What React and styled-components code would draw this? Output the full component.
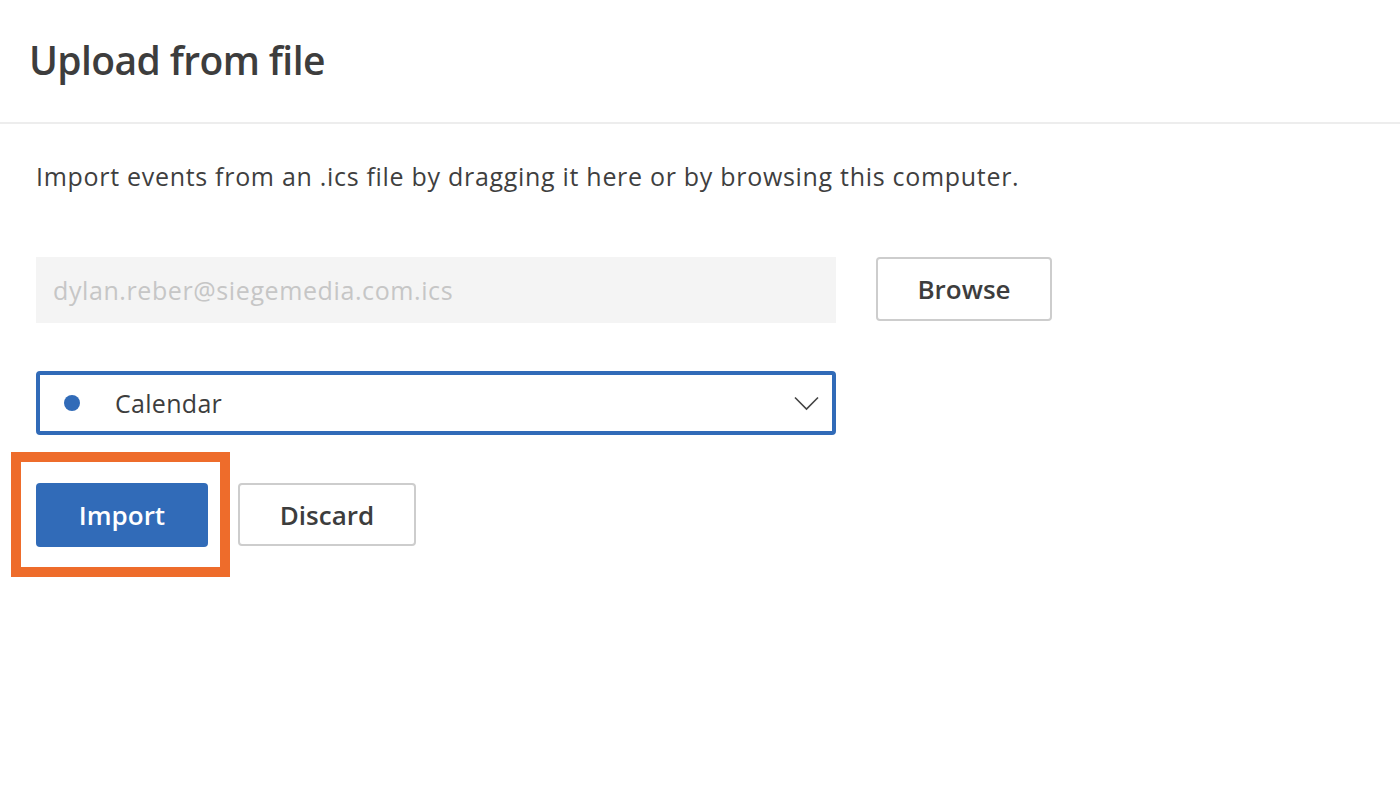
import React from "react";
import styled, { createGlobalStyle } from "styled-components";

const Global = createGlobalStyle`
  html, body { margin: 0; padding: 0; background: #fff; }
  body { font-family: "Open Sans", "Noto Sans", sans-serif; color: #3f3f3f; }
  * { box-sizing: border-box; }
`;

const Page = styled.div`
  width: 1400px;
  height: 796px;
  background: #fff;
`;

const Header = styled.header`
  height: 124px;
  display: flex;
  align-items: center;
  padding: 0 0 4px 29px;
  border-bottom: 2px solid #ededed;
`;

const Title = styled.h1`
  margin: 0;
  font-size: 39px;
  font-weight: 600;
  color: #3d3d3d;
  letter-spacing: -0.6px;
`;

const Body = styled.main`
  padding: 35px 0 0 36px;
  display: flex;
  flex-direction: column;
`;

const Description = styled.p`
  margin: 0;
  font-size: 25px;
  line-height: 34px;
  letter-spacing: 0.7px;
  color: #3f3f3f;
`;

const Row = styled.div`
  display: flex;
  align-items: flex-start;
  gap: ${(p) => p.$gap || 40}px;
  margin-top: ${(p) => p.$top || 0}px;
`;

const FileField = styled.div`
  width: 800px;
  height: 66px;
  background: #f4f4f4;
  display: flex;
  align-items: center;
  padding-left: 17px;
  font-size: 25px;
  letter-spacing: 0.6px;
  color: #c6c6c6;
`;

const Button = styled.button`
  width: ${(p) => p.$w}px;
  height: ${(p) => p.$h || 64}px;
  border-radius: 4px;
  font-family: inherit;
  font-size: 26px;
  font-weight: 600;
  cursor: pointer;
  padding: 0;
  border: ${(p) => (p.$primary ? "none" : "2px solid #cdcdcd")};
  background: ${(p) => (p.$primary ? "#316bb8" : "#fff")};
  color: ${(p) => (p.$primary ? "#fff" : "#3d3d3d")};
`;

const Select = styled.div`
  width: 800px;
  height: 64px;
  border: 4px solid #316bb8;
  border-radius: 4px;
  display: flex;
  align-items: center;
  padding: 0 13px 0 24px;
  font-size: 25px;
  letter-spacing: 0.3px;
  color: #3d3d3d;
`;

const Dot = styled.span`
  width: 16px;
  height: 16px;
  border-radius: 50%;
  background: #316bb8;
  flex: none;
`;

const SelectLabel = styled.span`
  margin-left: 35px;
  flex: 1;
`;

const Highlight = styled.div`
  position: relative;
  &::after {
    content: "";
    position: absolute;
    top: -31px;
    left: -25px;
    right: -22px;
    bottom: -30px;
    border: 10px solid #ee6c2b;
    pointer-events: none;
  }
`;

const Chevron = () => (
  <svg width="25" height="15" viewBox="0 0 25 15" fill="none">
    <path d="M1 1.5 L12.5 13 L24 1.5" stroke="#444" strokeWidth="1.6" />
  </svg>
);

export default function App() {
  return (
    <Page>
      <Global />
      <Header>
        <Title>Upload from file</Title>
      </Header>
      <Body>
        <Description>
          Import events from an .ics file by dragging it here or by browsing this computer.
        </Description>
        <Row $top={64} $gap={40}>
          <FileField>dylan.reber@siegemedia.com.ics</FileField>
          <Button $w={176}>Browse</Button>
        </Row>
        <Row $top={48}>
          <Select>
            <Dot />
            <SelectLabel>Calendar</SelectLabel>
            <Chevron />
          </Select>
        </Row>
        <Row $top={48} $gap={30}>
          <Highlight>
            <Button $primary $w={172}>Import</Button>
          </Highlight>
          <Button $w={178} $h={63}>Discard</Button>
        </Row>
      </Body>
    </Page>
  );
}
